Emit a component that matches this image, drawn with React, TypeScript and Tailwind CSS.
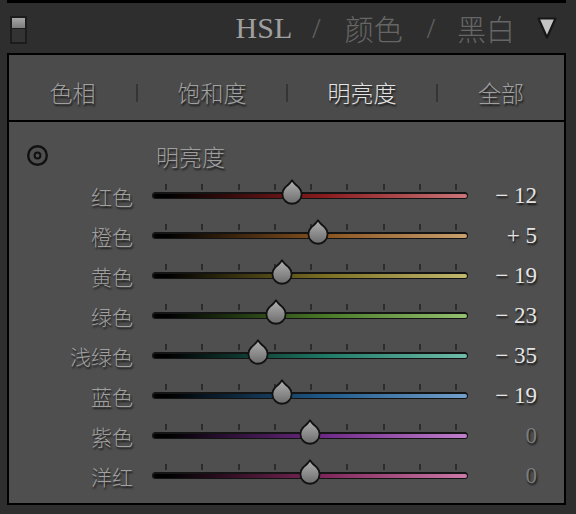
import React from "react";

type Row = { label: string; value: number; grad: string };

const rows: Row[] = [
  { label: "红色", value: -12, grad: "bg-[linear-gradient(to_right,#000_4%,#8b1d1f_55%,#c97579_100%)]" },
  { label: "橙色", value: 5, grad: "bg-[linear-gradient(to_right,#000_4%,#8a5420_55%,#c9a06e_100%)]" },
  { label: "黄色", value: -19, grad: "bg-[linear-gradient(to_right,#000_4%,#7c7024_55%,#c2b86e_100%)]" },
  { label: "绿色", value: -23, grad: "bg-[linear-gradient(to_right,#000_4%,#4a7a28_55%,#94c070_100%)]" },
  { label: "浅绿色", value: -35, grad: "bg-[linear-gradient(to_right,#000_4%,#1f7a66_55%,#70bcaa_100%)]" },
  { label: "蓝色", value: -19, grad: "bg-[linear-gradient(to_right,#000_4%,#205a8a_55%,#74a0cc_100%)]" },
  { label: "紫色", value: 0, grad: "bg-[linear-gradient(to_right,#000_4%,#702a88_55%,#c080cc_100%)]" },
  { label: "洋红", value: 0, grad: "bg-[linear-gradient(to_right,#000_4%,#80285c_55%,#cc7aa8_100%)]" },
];

const ticks = [0, 1, 2, 3, 4, 5, 6, 7, 8];

function Thumb({ id }: { id: string }) {
  return (
    <svg width="22" height="26" viewBox="0 0 22 26">
      <defs>
        <linearGradient id={id} x1="0" y1="0" x2="0" y2="1">
          <stop offset="0" stopColor="#b2b2b2" />
          <stop offset="1" stopColor="#6c6c6c" />
        </linearGradient>
      </defs>
      <path
        d="M11 1.2 C12.7 4 15.6 6.4 17.9 8.5 A9.6 9.6 0 1 1 4.1 8.5 C6.4 6.4 9.3 4 11 1.2 Z"
        fill={`url(#${id})`}
        stroke="#111"
        strokeWidth="1.8"
        strokeLinejoin="round"
      />
    </svg>
  );
}

function formatValue(v: number) {
  if (v === 0) return "0";
  return v < 0 ? `\u2212 ${Math.abs(v)}` : `+ ${v}`;
}

const cjk = "font-['Noto_Sans_CJK_SC',sans-serif]";
const serif = "font-['Liberation_Serif',serif]";
const shadow = "[text-shadow:1px_2px_2px_rgba(0,0,0,0.75)]";

export default function App() {
  return (
    <div className="w-[576px] h-[514px] overflow-hidden bg-[#2e2e2e]">
      <div className="ml-[7px] w-[559px] h-[3px] bg-black" />

      {/* header */}
      <div className="flex h-[50px] items-center">
        <div className="ml-[10px] self-start mt-[13px] w-[17px] h-[28px] bg-[#1c1c1c] p-[2px] flex flex-col">
          <div className="h-[10px] bg-[linear-gradient(#a6a6a6,#7c7c7c)]" />
          <div className="flex-1 mt-[1px] bg-[#333333]" />
        </div>
        <div className="ml-auto flex items-center leading-none">
          <span className={`${serif} text-[30px] text-[#a0a0a0]`}>HSL</span>
          <span className={`${serif} ml-[20px] text-[30px] text-[#5e5e5e]`}>/</span>
          <span className={`${cjk} ml-[24px] text-[29px] font-light text-[#666666]`}>颜色</span>
          <span className={`${serif} ml-[24px] text-[30px] text-[#5e5e5e]`}>/</span>
          <span className={`${cjk} ml-[22px] text-[29px] font-light text-[#666666]`}>黑白</span>
        </div>
        <svg className="ml-[21px] mr-[18px]" width="22" height="24" viewBox="0 0 22 24">
          <path d="M2.5 2.5 L19.5 2.5 L11 21.5 Z" fill="#c4c4c4" stroke="#161616" strokeWidth="2.2" strokeLinejoin="round" />
        </svg>
      </div>

      {/* panel */}
      <div className="ml-[7px] w-[559px] h-[452px] border-2 border-black bg-[#4f4f4f] flex flex-col">
        {/* tabs */}
        <div className={`h-[65px] bg-[#4b4b4b] flex items-start pt-[22px] ${cjk} text-[23px] font-light leading-[30px] ${shadow}`}>
          <div className="w-[127px] text-center text-[#a0a0a0]">色相</div>
          <div className="w-[2px] h-[18px] mt-[7px] bg-[#353535]" />
          <div className="w-[148px] text-center text-[#a0a0a0]">饱和度</div>
          <div className="w-[2px] h-[18px] mt-[7px] bg-[#353535]" />
          <div className="w-[148px] text-center text-[#e2e2e2]">明亮度</div>
          <div className="w-[2px] h-[18px] mt-[7px] bg-[#353535]" />
          <div className="flex-1 text-center text-[#a0a0a0]">全部</div>
        </div>
        <div className="h-[2px] bg-black" />

        {/* sliders */}
        <div className="flex-1 pt-[14px] flex flex-col">
          <div className="h-[40px] flex items-center">
            <svg className="ml-[17px] mb-[2px]" width="23" height="23" viewBox="0 0 23 23">
              <circle cx="11.5" cy="11.5" r="9.3" fill="none" stroke="#111" strokeWidth="2.4" />
              <circle cx="11.5" cy="11.5" r="2.9" fill="none" stroke="#111" strokeWidth="2" />
            </svg>
            <span className={`ml-[107px] ${cjk} text-[23px] font-light leading-[30px] text-[#9e9e9e] ${shadow}`}>明亮度</span>
          </div>

          {rows.map((r, i) => (
            <div key={r.label} className="h-[40px] flex items-center">
              <div className={`w-[124px] text-right ${cjk} text-[21px] font-light leading-[30px] text-[#a0a0a0] ${shadow}`}>
                {r.label}
              </div>
              <div className="relative ml-[19px] w-[316px] h-[40px]">
                <div className="absolute left-[13px] top-[8px] w-[292px] h-[6px] flex justify-between">
                  {ticks.map((t) => (
                    <div key={t} className="w-[2px] h-[6px] bg-[#2c2c2c]" />
                  ))}
                </div>
                <div className="absolute left-0 right-0 top-[16px] h-[7px] rounded-full bg-[#141414] p-[1.5px]">
                  <div className={`h-full rounded-full ${r.grad}`} />
                </div>
                <div
                  className="absolute top-[3px]"
                  style={{ left: 8 + (r.value + 100) * 1.5 - 11 }}
                >
                  <Thumb id={`thumb-${i}`} />
                </div>
              </div>
              <div
                className={`w-[69px] text-right ${serif} text-[23px] leading-[30px] ${shadow} ${
                  r.value === 0 ? "text-[#7c7c7c]" : "text-[#e4e4e4]"
                }`}
              >
                {formatValue(r.value)}
              </div>
            </div>
          ))}
        </div>
      </div>
    </div>
  );
}
